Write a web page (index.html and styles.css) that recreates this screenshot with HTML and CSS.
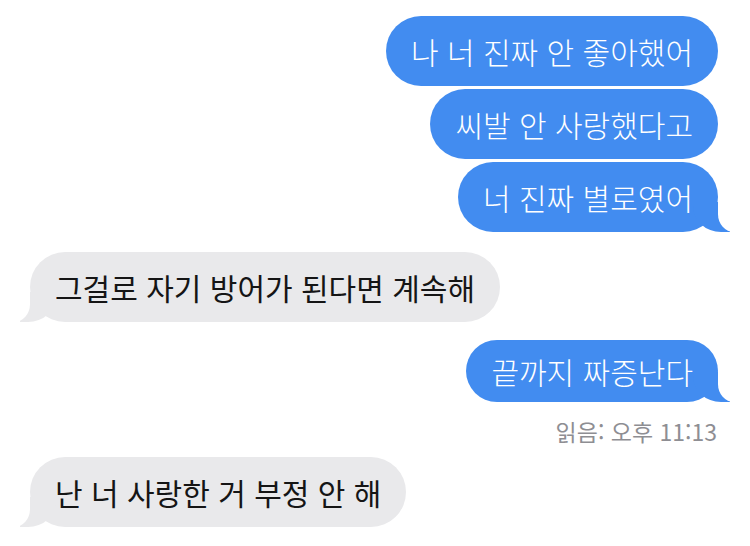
FILE: index.html
```html
<!DOCTYPE html>
<html lang="ko">
<head>
<meta charset="utf-8">
<link rel="stylesheet" href="styles.css">
</head>
<body>
<div class="chat">
  <div class="bubble me">나 너 진짜 안 좋아했어</div>
  <div class="bubble me">씨발 안 사랑했다고</div>
  <div class="bubble me tail">너 진짜 별로였어</div>
  <div class="bubble them tail">그걸로 자기 방어가 된다면 계속해</div>
  <div class="bubble me tail short">끝까지 짜증난다</div>
  <div class="receipt">읽음: 오후 11:13</div>
  <div class="bubble them tail">난 너 사랑한 거 부정 안 해</div>
</div>
</body>
</html>
```

FILE: styles.css
```css
html, body {
  margin: 0;
  padding: 0;
  background: #ffffff;
}

body {
  width: 750px;
  height: 546px;
  overflow: hidden;
  font-family: "Noto Sans CJK KR", "Noto Sans", sans-serif;
}

.chat {
  display: flex;
  flex-direction: column;
  padding: 16px 32px 0 30px;
}

.bubble {
  position: relative;
  font-size: 30px;
  font-weight: 300;
  line-height: 36px;
  padding: 17px 25px;
  border-radius: 35px;
  max-width: 600px;
  white-space: nowrap;
}

.me {
  align-self: flex-end;
  background: #428cf0;
  color: #ffffff;
  margin-bottom: 3px;
}

.them {
  align-self: flex-start;
  background: #e9e9eb;
  color: #151515;
  font-weight: 400;
}

.me.tail {
  margin-bottom: 0;
}

.short {
  padding-top: 13px;
  padding-bottom: 13px;
  border-radius: 31px;
  margin-top: 18px;
}

.them.tail {
  margin-top: 20px;
}

.tail::before,
.tail::after {
  content: "";
  position: absolute;
  bottom: 0;
  height: 30px;
}

.me.tail::before {
  right: -12px;
  width: 37px;
  background: #428cf0;
  border-bottom-left-radius: 28px 26px;
}

.me.tail::after {
  right: -44px;
  width: 44px;
  background: #ffffff;
  border-bottom-left-radius: 16px 18px;
}

.them.tail::before {
  left: -10px;
  width: 36px;
  background: #e9e9eb;
  border-bottom-right-radius: 28px 26px;
}

.them.tail::after {
  left: -44px;
  width: 44px;
  background: #ffffff;
  border-bottom-right-radius: 16px 18px;
}

.receipt {
  align-self: flex-end;
  margin-top: 16px;
  margin-right: 1px;
  font-size: 23px;
  line-height: 27px;
  color: #8e8e93;
}

.receipt + .them.tail {
  margin-top: 12px;
}
```
